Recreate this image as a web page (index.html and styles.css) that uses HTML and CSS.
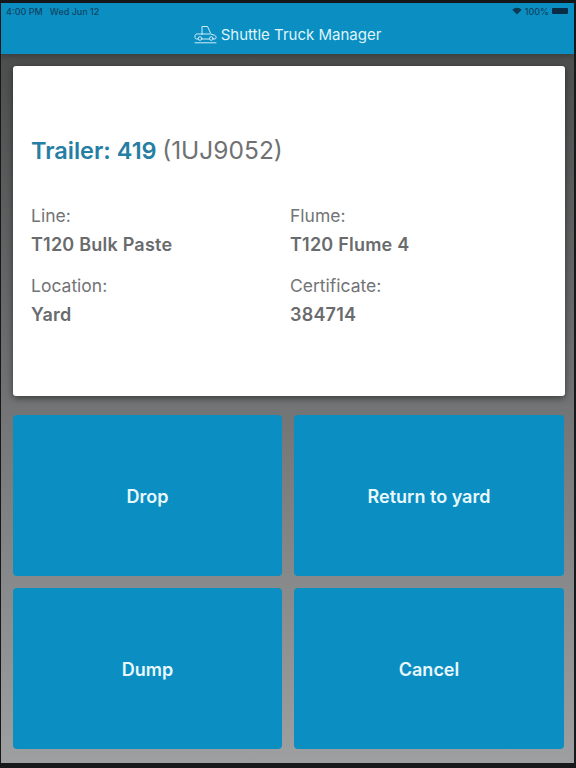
FILE: index.html
```html
<!DOCTYPE html>
<html lang="en">
<head>
<meta charset="utf-8">
<title>Shuttle Truck Manager</title>
<link rel="stylesheet" href="styles.css">
</head>
<body>
<div class="screen">
  <header class="topbar">
    <div class="status">
      <span>4:00 PM&nbsp;&nbsp; Wed Jun 12</span>
      <span class="status-right">
        <svg class="wifi" viewBox="0 0 12 9" width="10" height="8"><path d="M6 8.600 0.300 3a8.200 8.200 0 0 1 11.400 0Z" fill="#0a3a55"/></svg>
        <span>100%</span>
        <span class="battery"></span>
      </span>
    </div>
    <div class="title">
      <svg class="logo" viewBox="0 0 23 19" width="23" height="19" fill="none" stroke="#cfeefa" stroke-width="1" stroke-linecap="round" stroke-linejoin="round">
        <path d="M8 9V1.500h5.500L16.500 8"/>
        <path d="M8 9H3c-1.300 0-2 .8-2 1.800v1.700c0 .8.500 1.500 1.500 1.500H4"/>
        <path d="M8 9h8.500l4 1.200c1 .3 1.500 1 1.500 1.800v.8c0 .7-.500 1.200-1.200 1.200H19"/>
        <path d="M8 14h7.500"/>
        <circle cx="6" cy="13.500" r="1.800"/>
        <circle cx="17.300" cy="13.500" r="1.800"/>
        <path d="M1 17.800h21"/>
      </svg>
      <span>Shuttle Truck Manager</span>
    </div>
  </header>
  <main class="content">
    <section class="card">
      <h1 class="trailer"><strong>Trailer: 419</strong> <span class="plate">(1UJ9052)</span></h1>
      <div class="details">
        <div class="field"><div class="label">Line:</div><div class="value">T120 Bulk Paste</div></div>
        <div class="field"><div class="label">Flume:</div><div class="value">T120 Flume 4</div></div>
        <div class="field"><div class="label">Location:</div><div class="value">Yard</div></div>
        <div class="field"><div class="label">Certificate:</div><div class="value">384714</div></div>
      </div>
    </section>
    <div class="actions">
      <button class="action">Drop</button>
      <button class="action">Return to yard</button>
      <button class="action">Dump</button>
      <button class="action">Cancel</button>
    </div>
  </main>
</div>
</body>
</html>
```
FILE: styles.css
```css
* { box-sizing: border-box; }
html, body { margin: 0; padding: 0; }
body {
  width: 576px;
  height: 768px;
  overflow: hidden;
  background: #17181a;
  font-family: Inter, "Liberation Sans", sans-serif;
}
.screen {
  width: 573px;
  height: 760px;
  margin: 3px 0 0 1px;
  display: flex;
  flex-direction: column;
  background: linear-gradient(180deg, #474949 0%, #6f7172 50%, #9d9fa0 100%);
}
.topbar {
  height: 51px;
  flex: none;
  background: #0b8fc2;
  box-shadow: 0 2px 6px rgba(0, 0, 0, .25);
}
.status {
  height: 15px;
  padding: 1px 6px 0 5px;
  display: flex;
  justify-content: space-between;
  align-items: center;
  font-size: 9px;
  font-weight: 500;
  color: #0f4564;
}
.status-right { display: flex; align-items: center; gap: 3px; }
.battery {
  width: 16px;
  height: 6px;
  border-radius: 1px;
  background: #0a2c44;
}
.title {
  height: 33px;
  display: flex;
  align-items: center;
  justify-content: center;
  gap: 4px;
  color: #dff4fb;
  font-size: 15px;
}
.content {
  flex: 1;
  padding: 12px 9px 0 12px;
  display: flex;
  flex-direction: column;
}
.card {
  height: 330px;
  flex: none;
  background: #fff;
  border-radius: 3px;
  box-shadow: 0 2px 7px rgba(0, 0, 0, .5);
  padding: 68px 18px 0;
}
.trailer {
  margin: 0 0 38px;
  font-size: 23.500px;
  line-height: 32px;
  font-weight: 400;
  color: #6f7173;
}
.trailer strong { font-weight: 600; color: #257ea3; }
.plate { font-size: 24.500px; margin-left: -1px; }
.details {
  display: grid;
  grid-template-columns: 259px 1fr;
  row-gap: 12px;
}
.label {
  font-size: 17.500px;
  line-height: 22px;
  color: #727476;
}
.value {
  font-size: 18px;
  line-height: 36px;
  font-weight: 600;
  letter-spacing: .22px;
  color: #696b6d;
}
.actions {
  margin-top: 19px;
  display: grid;
  grid-template-columns: 269px 270px;
  grid-template-rows: 161px 161px;
  column-gap: 12px;
  row-gap: 12px;
}
.action {
  border: 0;
  border-radius: 4px;
  background: #0b8fc2;
  color: #e8f8fd;
  font: 600 18px Inter, "Liberation Sans", sans-serif;
  padding: 1px 0 0;
}
```
